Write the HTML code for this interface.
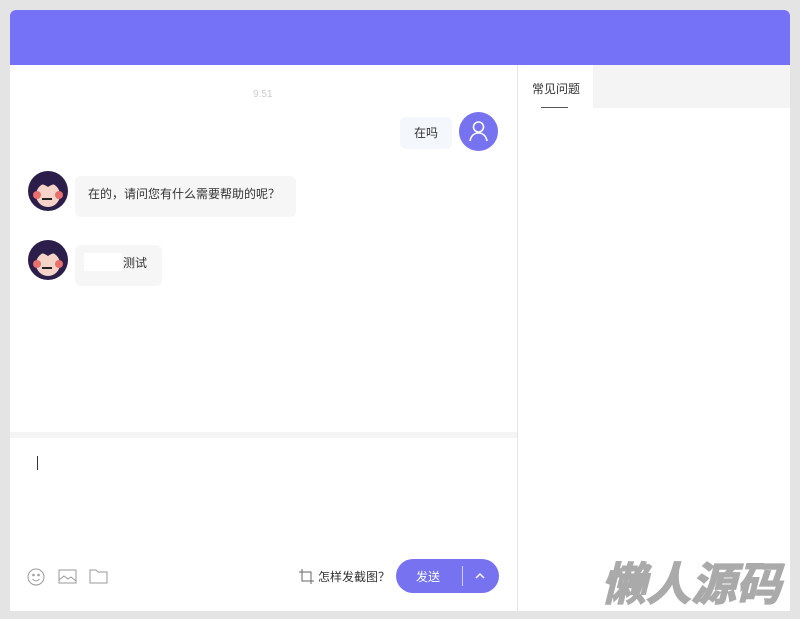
<!DOCTYPE html>
<html><head><meta charset="utf-8"><style>
body{margin:0;width:800px;height:619px;background:#e4e4e4;font-family:"Liberation Sans","Noto Sans CJK SC",sans-serif;position:relative;overflow:hidden}
.abs{position:absolute}
.hdr{left:10px;top:10px;width:780px;height:55px;background:#7672f7;border-radius:6px 6px 0 0}
.left{left:10px;top:65px;width:507px;height:546px;background:#fff}
.right{left:518px;top:65px;width:272px;height:546px;background:#fff}
.bub{background:#f6f6f6;border-radius:6px;font-size:12px;color:#333}
.av{width:40px;height:40px;border-radius:50%;overflow:hidden}
</style></head><body>
<div class="abs hdr"></div>
<div class="abs left"></div>
<div class="abs right"></div>
<div class="abs" style="left:593px;top:65px;width:197px;height:43px;background:#f4f4f4"></div>
<div class="abs" style="left:532px;top:80px;font-size:12px;color:#333">常见问题</div>
<div class="abs" style="left:541px;top:107px;width:27px;height:1px;background:#555"></div>
<div class="abs" style="left:253px;top:89px;font-size:10px;color:#ccc">9:51</div>
<div class="abs bub" style="left:400px;top:117px;width:52px;height:32px;line-height:32px;text-align:center;background:#f4f7fb">在吗</div>
<div class="abs av" style="left:459px;top:112px;width:39px;height:39px;background:#7672f0">
<svg width="39" height="39" viewBox="0 0 39 39"><circle cx="19.5" cy="15" r="5" fill="none" stroke="#fff" stroke-width="1.6"/><path d="M11 29c1-5 4-8 8.5-8S27 24 28 29" fill="none" stroke="#fff" stroke-width="1.6"/></svg></div>
<svg class="abs" style="left:28px;top:171px" width="40" height="40" viewBox="0 0 40 40"><circle cx="20" cy="20" r="20" fill="#2c1e4a"/><circle cx="20" cy="24" r="12" fill="#f6d3c8"/><path d="M6 16c3-9 25-9 28 0c-6-4-10-3-14 0c-4-3-8-4-14 0z" fill="#2c1e4a"/><circle cx="9" cy="24" r="4" fill="#e8706d"/><circle cx="31" cy="24" r="4" fill="#e8706d"/><rect x="14" y="27" width="10" height="2" fill="#222"/></svg>
<div class="abs bub" style="left:75px;top:176px;width:221px;height:41px;line-height:36px;padding-left:13px;box-sizing:border-box">在的，请问您有什么需要帮助的呢？</div>
<svg class="abs" style="left:28px;top:240px" width="40" height="40" viewBox="0 0 40 40"><circle cx="20" cy="20" r="20" fill="#2c1e4a"/><circle cx="20" cy="24" r="12" fill="#f6d3c8"/><path d="M6 16c3-9 25-9 28 0c-6-4-10-3-14 0c-4-3-8-4-14 0z" fill="#2c1e4a"/><circle cx="9" cy="24" r="4" fill="#e8706d"/><circle cx="31" cy="24" r="4" fill="#e8706d"/><rect x="14" y="27" width="10" height="2" fill="#222"/></svg>
<div class="abs bub" style="left:75px;top:245px;width:87px;height:41px;line-height:36px;padding-left:48px;box-sizing:border-box">测试</div>
<div class="abs" style="left:84px;top:253px;width:38px;height:18px;background:#fff"></div>
<div class="abs" style="left:10px;top:432px;width:507px;height:6px;background:#f4f4f4"></div>
<div class="abs" style="left:37px;top:456px;width:1px;height:14px;background:#333"></div>
<svg class="abs" style="left:27px;top:567px" width="85" height="20" viewBox="0 0 85 20" fill="none" stroke="#999" stroke-width="1"><circle cx="9" cy="10" r="8"/><circle cx="6.5" cy="8" r=".8"/><circle cx="11.5" cy="8" r=".8"/><path d="M5.5 12c2 2.5 5 2.5 7 0"/><rect x="32" y="3" width="17" height="13"/><path d="M32 13l5-4 4 3 3-2 5 4"/><path d="M63 3h6l2 2h9v11H63z"/></svg>
<svg class="abs" style="left:298px;top:568px" width="18" height="18" viewBox="0 0 18 18" fill="none" stroke="#666" stroke-width="1"><path d="M4 1v12h12M1 4h12v12"/></svg>
<div class="abs" style="left:318px;top:568px;font-size:12px;color:#333">怎样发截图？</div>
<div class="abs" style="left:396px;top:559px;width:103px;height:34px;border-radius:17px;background:#7672f0"></div>
<div class="abs" style="left:416px;top:568px;font-size:12px;color:#fff">发送</div>
<div class="abs" style="left:462px;top:566px;width:1px;height:20px;background:#cfcdfb"></div>
<svg class="abs" style="left:474px;top:571px" width="12" height="10" viewBox="0 0 12 10"><path d="M2 7l4-4 4 4" fill="none" stroke="#fff" stroke-width="1.5"/></svg>
<div class="abs" style="left:601px;top:557px;font-size:45px;font-weight:bold;font-style:italic;color:#aaa;line-height:56px;-webkit-text-stroke:1.5px #aaa">懒人源码</div>
</body></html>
